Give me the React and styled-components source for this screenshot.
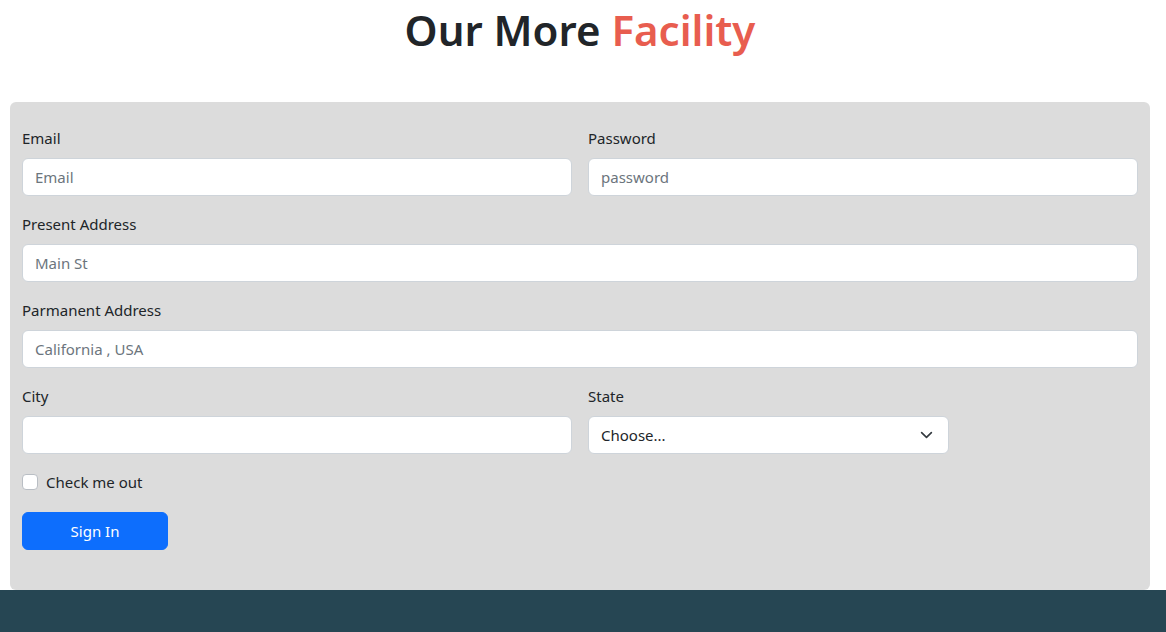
import styled, { createGlobalStyle } from 'styled-components';

const GlobalStyle = createGlobalStyle`
  * {
    box-sizing: border-box;
  }
  body {
    margin: 0;
    font-family: "Noto Sans", "Open Sans", sans-serif;
    font-size: 15px;
    line-height: 1.5;
    color: #212529;
    background: #fff;
  }
`;

export default function App() {
  return (
    <>
      <GlobalStyle />
      <Section>
        <Title>
          Our More <Accent>Facility</Accent>
        </Title>
        <Panel>
          <Grid>
            <Field span={6}>
              <Label htmlFor="email">Email</Label>
              <Input id="email" type="email" placeholder="Email" />
            </Field>
            <Field span={6}>
              <Label htmlFor="password">Password</Label>
              <Input id="password" type="password" placeholder="password" />
            </Field>
            <Field span={12}>
              <Label htmlFor="present">Present Address</Label>
              <Input id="present" placeholder="Main St" />
            </Field>
            <Field span={12}>
              <Label htmlFor="permanent">Parmanent Address</Label>
              <Input id="permanent" placeholder="California , USA" />
            </Field>
            <Field span={6}>
              <Label htmlFor="city">City</Label>
              <Input id="city" />
            </Field>
            <Field span={4}>
              <Label htmlFor="state">State</Label>
              <SelectWrap>
                <Select id="state" defaultValue="">
                  <option value="">Choose...</option>
                  <option>...</option>
                </Select>
                <Chevron viewBox="0 0 16 16" aria-hidden="true">
                  <path d="M2 5l6 6 6-6" fill="none" stroke="#343a40" strokeWidth="2" strokeLinecap="round" strokeLinejoin="round" />
                </Chevron>
              </SelectWrap>
            </Field>
            <Field span={12}>
              <CheckRow>
                <Checkbox type="checkbox" id="check" />
                <CheckLabel htmlFor="check">Check me out</CheckLabel>
              </CheckRow>
            </Field>
            <Field span={12}>
              <Button type="button">Sign In</Button>
            </Field>
          </Grid>
        </Panel>
      </Section>
      <Footer />
    </>
  );
}

const Section = styled.section`
  padding: 0 16px 0 10px;
`;

const Title = styled.h1`
  margin: 0;
  padding: 4px 0 46px;
  text-align: center;
  font-size: 42px;
  font-weight: 600;
  line-height: 52px;
  color: #212529;
`;

const Accent = styled.span`
  color: #e85d4f;
`;

const Panel = styled.form`
  background-color: #dcdcdc;
  border-radius: 6px;
  padding: 24px 12px 40px;
`;

const Grid = styled.div`
  display: grid;
  grid-template-columns: repeat(12, 1fr);
  gap: 16px;
`;

const Field = styled.div`
  grid-column: span ${(p) => p.span};
  display: flex;
  flex-direction: column;
`;

const Label = styled.label`
  margin-bottom: 8px;
  line-height: 24px;
`;

const Input = styled.input`
  height: 38px;
  padding: 6px 12px;
  font: inherit;
  color: #212529;
  background: #fff;
  border: 1px solid #ced4da;
  border-radius: 6px;
  outline: none;

  &::placeholder {
    color: #6c757d;
  }
`;

const SelectWrap = styled.div`
  position: relative;
`;

const Select = styled.select`
  width: 100%;
  height: 38px;
  padding: 6px 36px 6px 12px;
  font: inherit;
  color: #212529;
  background: #fff;
  border: 1px solid #ced4da;
  border-radius: 6px;
  appearance: none;
  outline: none;
`;

const Chevron = styled.svg`
  position: absolute;
  right: 16px;
  top: 50%;
  width: 13px;
  height: 13px;
  transform: translateY(-50%);
  pointer-events: none;
`;

const CheckRow = styled.div`
  display: flex;
  align-items: center;
  gap: 8px;
  min-height: 24px;
  margin-bottom: 2px;
`;

const Checkbox = styled.input`
  appearance: none;
  width: 16px;
  height: 16px;
  margin: 0;
  background: #fff;
  border: 1px solid #b9bec4;
  border-radius: 4px;
`;

const CheckLabel = styled.label`
  line-height: 24px;
`;

const Button = styled.button`
  align-self: flex-start;
  width: 146px;
  height: 38px;
  font: inherit;
  color: #fff;
  background-color: #0d6efd;
  border: 1px solid #0d6efd;
  border-radius: 6px;
  cursor: pointer;
`;

const Footer = styled.footer`
  height: 60px;
  background-color: #264653;
`;
